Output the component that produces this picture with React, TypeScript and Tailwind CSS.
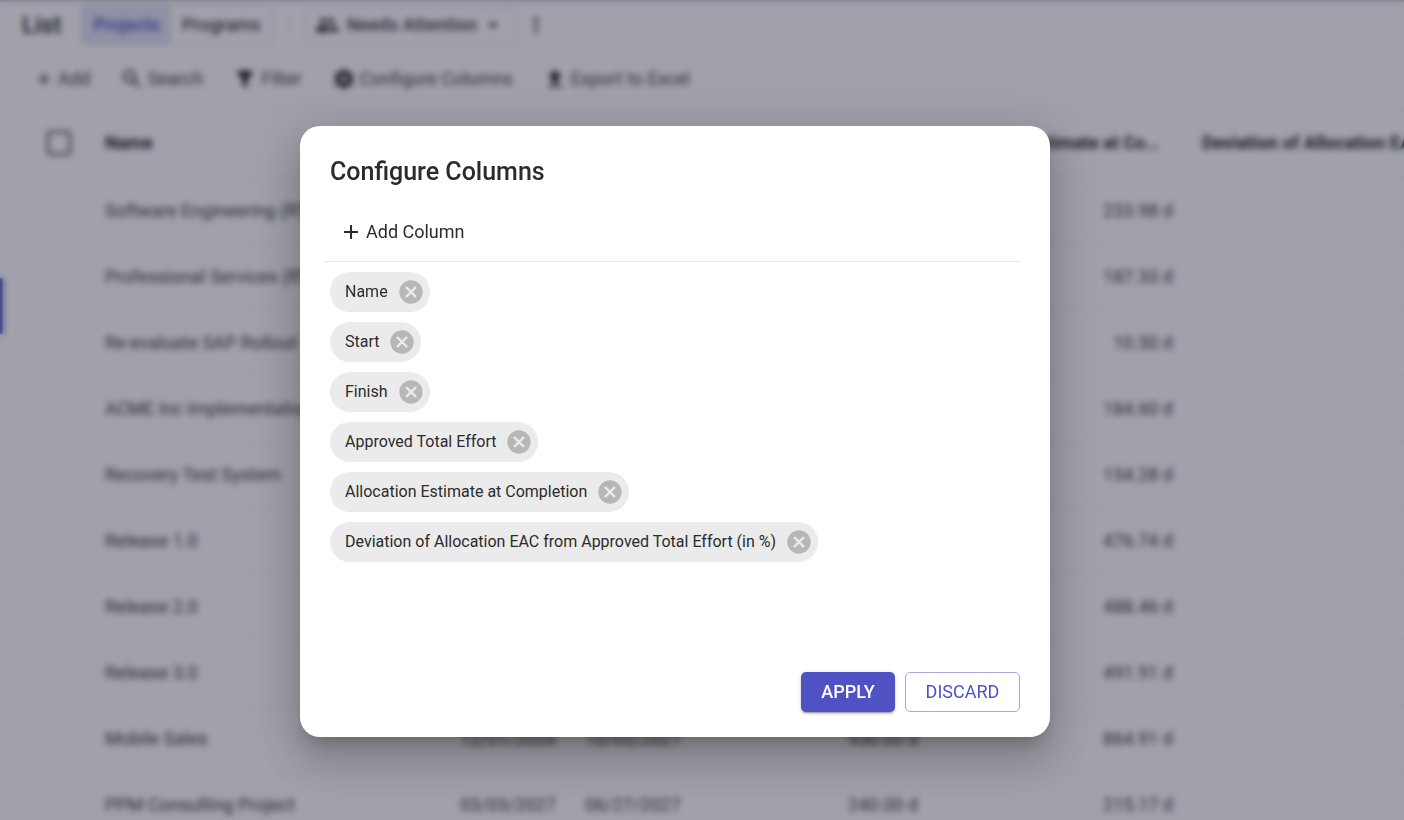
import { useState } from "react";
import type { ReactNode } from "react";
import {
  MdAdd,
  MdArrowDropDown,
  MdCancel,
  MdFileUpload,
  MdFilterAlt,
  MdMoreVert,
  MdPeople,
  MdSearch,
  MdSettings,
} from "react-icons/md";

type Project = {
  name: string;
  start?: string;
  finish?: string;
  approved?: string;
  estimate: string;
};

const projects: Project[] = [
  { name: "Software Engineering (RT)", estimate: "233.98 d" },
  { name: "Professional Services (RT)", estimate: "187.33 d" },
  { name: "Re-evaluate SAP Rollout", estimate: "10.50 d" },
  { name: "ACME Inc Implementation", estimate: "184.60 d" },
  { name: "Recovery Test System", estimate: "154.28 d" },
  { name: "Release 1.0", estimate: "476.74 d" },
  { name: "Release 2.0", estimate: "488.46 d" },
  { name: "Release 3.0", estimate: "491.91 d" },
  {
    name: "Mobile Sales",
    start: "12/01/2026",
    finish: "10/03/2027",
    approved: "930.00 d",
    estimate: "864.91 d",
  },
  {
    name: "PPM Consulting Project",
    start: "03/03/2027",
    finish: "06/27/2027",
    approved: "240.00 d",
    estimate: "215.17 d",
  },
];

const initialColumns = [
  "Name",
  "Start",
  "Finish",
  "Approved Total Effort",
  "Allocation Estimate at Completion",
  "Deviation of Allocation EAC from Approved Total Effort (in %)",
];

function ToolbarButton({ icon, label }: { icon: ReactNode; label: string }) {
  return (
    <button type="button" className="flex items-center gap-1">
      {icon}
      {label}
    </button>
  );
}

function PageHeader() {
  return (
    <header className="flex h-12 items-center border-t-2 border-[#c9c9d4] pl-[22px]">
      <h1 className="mr-5 text-2xl font-medium text-[#1c1c1c]">List</h1>
      <div className="flex h-10 rounded border border-[#dcdce6] text-lg font-medium">
        <button type="button" className="bg-[#e0e4f4] px-[11px] text-[#5052c4]">
          Projects
        </button>
        <button type="button" className="px-[11px]">
          Programs
        </button>
      </div>
      <div className="mx-[15px] h-6 w-px bg-[#e4e4ea]" />
      <button
        type="button"
        className="flex h-9 items-center rounded border border-[#dcdce6] px-[10px] text-lg font-medium"
      >
        <MdPeople className="mr-2 size-6 text-[#222222]" />
        Needs Attention
        <MdArrowDropDown className="ml-1 size-6 text-[#222222]" />
      </button>
      <button type="button" aria-label="More options" className="ml-2">
        <MdMoreVert className="size-6 text-[#222222]" />
      </button>
    </header>
  );
}

function Toolbar() {
  return (
    <div className="flex h-[62px] items-center gap-[30px] pl-[34px] text-lg">
      <ToolbarButton icon={<MdAdd className="size-5 text-[#111111]" />} label="Add" />
      <ToolbarButton icon={<MdSearch className="size-6 text-[#222222]" />} label="Search" />
      <ToolbarButton icon={<MdFilterAlt className="size-6 text-[#111111]" />} label="Filter" />
      <ToolbarButton icon={<MdSettings className="size-6 text-[#111111]" />} label="Configure Columns" />
      <ToolbarButton icon={<MdFileUpload className="size-6 text-[#111111]" />} label="Export to Excel" />
    </div>
  );
}

function ProjectTable() {
  return (
    <div className="ml-[22px] overflow-hidden">
      <table className="w-[1700px] table-fixed border-collapse text-left text-lg">
        <colgroup>
          <col className="w-[73px]" />
          <col className="w-[355px]" />
          <col className="w-[125px]" />
          <col className="w-[125px]" />
          <col className="w-[227px]" />
          <col className="w-[265px]" />
          <col />
        </colgroup>
        <thead>
          <tr className="h-[67px] border-y border-[#eeeef3] text-[#222222]">
            <th className="pb-[3px] pl-[25px]">
              <input
                type="checkbox"
                aria-label="Select all projects"
                className="block size-6 appearance-none rounded-[3px] border-2 border-[#333333]"
              />
            </th>
            <th className="px-[10px] pb-[3px] font-bold">Name</th>
            <th className="px-[10px] pb-[3px] font-bold">Start</th>
            <th className="px-[10px] pb-[3px] font-bold">Finish</th>
            <th className="px-[10px] pb-[3px] font-bold">Approved Total Effort</th>
            <th className="pr-[26px] pb-[3px] pl-[14px] font-bold">
              <div className="truncate">Allocation Estimate at Completion</div>
            </th>
            <th className="px-[10px] pb-[3px] font-bold">
              <div className="truncate">
                Deviation of Allocation EAC from Approved Total Effort (in %)
              </div>
            </th>
          </tr>
        </thead>
        <tbody>
          {projects.map((p) => (
            <tr key={p.name} className="h-[66px] border-b border-[#eeeef3]">
              <td />
              <td className="truncate px-[10px]">{p.name}</td>
              <td className="px-[10px]">{p.start}</td>
              <td className="px-[10px]">{p.finish}</td>
              <td className="pr-[9px] text-right">{p.approved}</td>
              <td className="pr-[19px] text-right">{p.estimate}</td>
              <td />
            </tr>
          ))}
        </tbody>
      </table>
    </div>
  );
}

function ConfigureColumnsDialog() {
  const [columns, setColumns] = useState(initialColumns);
  return (
    <div
      role="dialog"
      aria-modal="true"
      aria-labelledby="dialog-title"
      className="flex min-h-[611px] w-[750px] flex-col rounded-[20px] bg-white px-[30px] pt-7 pb-[25px] text-[#2b2b2b] shadow-[0_11px_15px_-7px_rgba(0,0,0,0.2),0_24px_38px_3px_rgba(0,0,0,0.14),0_9px_46px_8px_rgba(0,0,0,0.12)]"
    >
      <h2 id="dialog-title" className="text-[25px] leading-9 font-medium">
        Configure Columns
      </h2>
      <div className="mt-[13px] -ml-[5px] flex h-[59px] items-center border-b border-[#e6e6e6] pl-[14px]">
        <button type="button" className="flex items-center gap-[3px] text-lg">
          <MdAdd className="size-6" />
          Add Column
        </button>
      </div>
      <ul className="mt-[10px] flex flex-1 flex-col items-start gap-[10px]">
        {columns.map((c) => (
          <li
            key={c}
            className="flex h-10 items-center gap-[9px] rounded-full bg-[#ebebeb] pr-[5px] pl-[15px] text-base"
          >
            {c}
            <button
              type="button"
              aria-label={`Remove ${c}`}
              onClick={() => setColumns(columns.filter((x) => x !== c))}
            >
              <MdCancel className="size-7 text-[#b7b7b7]" />
            </button>
          </li>
        ))}
      </ul>
      <div className="flex justify-end gap-[10px] text-lg">
        <button
          type="button"
          className="h-10 min-w-[94px] rounded-[5px] bg-[#5052c4] font-medium text-white shadow-[0_3px_1px_-2px_rgba(0,0,0,0.2),0_2px_2px_0_rgba(0,0,0,0.14),0_1px_5px_0_rgba(0,0,0,0.12)]"
        >
          APPLY
        </button>
        <button
          type="button"
          className="h-10 min-w-[115px] rounded-[5px] border border-[#a7a8e1] text-[#5052c4]"
        >
          DISCARD
        </button>
      </div>
    </div>
  );
}

export default function App() {
  return (
    <div className="h-screen overflow-hidden bg-white font-['Roboto',sans-serif] text-[#3c3c3c]">
      <span className="absolute top-[278px] left-0 h-14 w-[3px] bg-[#3a3cc0]" />
      <PageHeader />
      <Toolbar />
      <ProjectTable />
      <div className="fixed inset-0 flex items-start justify-center bg-[#1a1a32]/41 pt-[126px] pr-[54px] backdrop-blur-[3px]">
        <ConfigureColumnsDialog />
      </div>
    </div>
  );
}
